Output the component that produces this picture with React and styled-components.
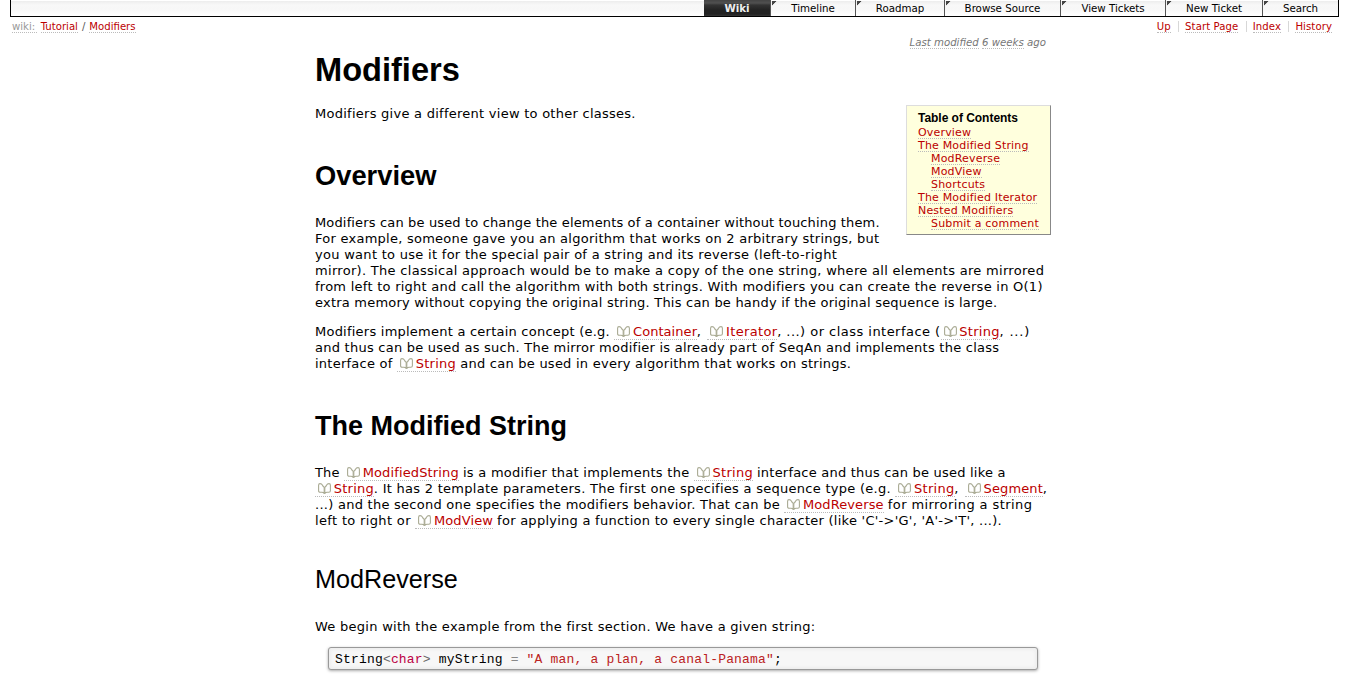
import React from "react";
import styled, { createGlobalStyle } from "styled-components";

const sans = `Verdana, "DejaVu Sans", sans-serif`;
const heading = `Arial, "Liberation Sans", sans-serif`;

const GlobalStyle = createGlobalStyle`
  body { margin: 0; background: #fff; color: #000; font: 13px/16px ${sans}; overflow: hidden; }
  * { box-sizing: border-box; }
`;

const Page = styled.div`
  height: 677px;
  overflow: hidden;
  padding: 0 10px;
`;
const Nav = styled.nav`
  display: flex;
  justify-content: flex-end;
  height: 17px;
  border: 1px solid #000;
  border-top: 0;
  background: linear-gradient(#fff 0 1px, #ededed 1px, #f8f8f8 5px, #f7f7f7 9px, #fff 16px);
`;
const Tab = styled.a`
  display: flex;
  justify-content: center;
  width: ${(p) => p.$w}px;
  height: 16px;
  border-left: ${(p) => (p.$active ? 0 : "1px solid #555")};
  font: ${(p) => (p.$active ? "bold" : "normal")} 10.25px/16px ${sans};
  color: ${(p) => (p.$active ? "#eee" : "#000")};
  background: ${(p) =>
    p.$active
      ? "linear-gradient(#444 0, #505050 3px, #333 5px, #222 10px, #222 14px, #333)"
      : "linear-gradient(135deg, #444 0 3px, transparent 3.6px) 1px 1px / 5px 5px no-repeat"};
`;
const Context = styled.div`
  display: flex;
  justify-content: space-between;
  align-items: flex-start;
  height: 19px;
  padding: 3px 7px 0 2px;
  font-size: 10.15px;
  line-height: 13px;
`;
const Crumbs = styled.div`
  display: flex;
  align-items: flex-start;
  gap: 4px;
  color: #555;
`;
const Links = styled.div`
  display: flex;
`;
const LinkCell = styled.span`
  display: flex;
  padding: 0 7.2px;
  letter-spacing: 0.08px;
  background: ${(p) => (p.$first ? "none" : "linear-gradient(#d7d7d7, #d7d7d7) 0 1px / 1px 11px no-repeat")};
  &:last-child { padding-right: 0; }
`;
const Link = styled.a`
  display: inline-block;
  color: ${(p) => (p.$muted ? "#999" : "#b00")};
  border-bottom: 1px dotted #bbb;
`;
const CrumbLink = styled(Link)`
  padding-right: ${(p) => (p.$muted ? 1.5 : 0)}px;
  height: 13px;
`;
const Article = styled.main`
  width: 736px;
  margin-left: 305px;
`;
const Modified = styled.div`
  height: 14px;
  text-align: right;
  padding-right: 5px;
  font: italic 10.2px/13px ${sans};
  color: #777;
  span { display: inline-block; height: 13px; border-bottom: 1px dotted #bbb; }
`;
const Title = styled.h1`
  margin: 0;
  height: 56px;
  font: bold 32.6px/40px ${heading};
`;
const Section = styled.h2`
  margin: 0;
  height: 93px;
  padding-top: 39px;
  font: bold ${(p) => p.$size}px/30px ${heading};
`;
const Subsection = styled.h3`
  margin: 0;
  height: 90px;
  padding-top: 35px;
  font: normal 25.2px/30px ${heading};
`;
const Toc = styled.aside`
  float: right;
  width: 145px;
  height: 130px;
  margin-top: -1px;
  padding: 6px 0 0 11px;
  border: 1px solid #ddd;
  border-right-color: #888;
  border-bottom-color: #888;
  background: #ffffdd;
  font-size: 11px;
  line-height: 13px;
  letter-spacing: 0.18px;
`;
const TocTitle = styled.h4`
  margin: 0;
  height: 14px;
  font: bold 12px/13px ${heading};
  letter-spacing: -0.03px;
`;
const TocItem = styled.div`
  height: 13px;
  padding-left: ${(p) => (p.$sub ? 13 : 0)}px;
  white-space: nowrap;
`;
const TocLink = styled(Link)`
  height: 13px;
`;
const Paragraph = styled.p`
  margin: 0 0 ${(p) => p.$gap ?? 13}px;
`;
const Line = styled.span`
  display: block;
  width: max-content;
  height: 16px;
  white-space: pre;
  letter-spacing: ${(p) => p.$ls ?? 0}px;
`;
const Run = styled.span`
  letter-spacing: ${(p) => p.$ls}px;
`;
const DocAnchor = styled(Link)`
  height: 16px;
  padding-left: 18.7px;
  margin-right: -0.3px;
  position: relative;
  letter-spacing: ${(p) => p.$ls - 0.04}px;
`;
const BookIcon = styled.svg`
  position: absolute;
  left: 3px;
  top: 2px;
  width: 13px;
  height: 11px;
`;
const Code = styled.pre`
  margin: 12px 13px 0;
  height: 23px;
  padding-left: 6px;
  border: 1px solid #999;
  border-radius: 3px;
  background: #f7f7f7;
  box-shadow: 0 1px 3px #aaa, inset 0 0 3px 2px #eee;
  font: 13px/23px "Liberation Mono", monospace;
  letter-spacing: 0.18px;
`;
const Token = styled.span`
  color: ${(p) => p.$c};
`;

const docSpacing = {
  Container: 0.097,
  Iterator: 0.382,
  String: 0.317,
  ModifiedString: 0.173,
  Segment: 0.171,
  ModReverse: 0.131,
  ModView: 0.146,
};

function Doc({ name }) {
  return (
    <DocAnchor $ls={docSpacing[name]}>
      <BookIcon viewBox="0 0 13 11" fill="none" stroke="#a9aa93" strokeWidth="1.1">
        <path d="M6.200 10.500C5.700 9.600 5 9.300 3.800 9.300H2.200C1.100 9.300 .6 8.700 .6 7.700V2.300C.6 1.100 1 .6 2 .6C3.300 .6 4 1.300 4.500 2.300C5 3.400 5.400 3.900 6.200 4.300Z" />
        <path d="M6.800 10.500C7.300 9.600 8 9.300 9.200 9.300H10.800C11.900 9.300 12.400 8.700 12.400 7.700V2.300C12.400 1.100 12 .6 11 .6C9.700 .6 9 1.300 8.500 2.300C8 3.400 7.600 3.900 6.800 4.300Z" />
      </BookIcon>
      {name}
    </DocAnchor>
  );
}

const tabs = [
  ["Wiki", 66, true],
  ["Timeline", 85],
  ["Roadmap", 89],
  ["Browse Source", 116],
  ["View Tickets", 105],
  ["New Ticket", 97],
  ["Search", 76],
];
const toc = [
  ["Overview"],
  ["The Modified String"],
  ["ModReverse", true],
  ["ModView", true],
  ["Shortcuts", true],
  ["The Modified Iterator"],
  ["Nested Modifiers"],
  ["Submit a comment", true],
];

export default function App() {
  return (
    <Page>
      <GlobalStyle />
      <Nav>
        {tabs.map(([label, width, active]) => (
          <Tab key={label} $w={width} $active={active}>{label}</Tab>
        ))}
      </Nav>
      <Context>
        <Crumbs>
          <CrumbLink $muted>wiki:</CrumbLink>
          <CrumbLink>Tutorial</CrumbLink>/<CrumbLink>Modifiers</CrumbLink>
        </Crumbs>
        <Links>
          {["Up", "Start Page", "Index", "History"].map((label, i) => (
            <LinkCell key={label} $first={i === 0}>
              <CrumbLink>{label}</CrumbLink>
            </LinkCell>
          ))}
        </Links>
      </Context>
      <Article>
        <Modified><span>Last modified</span> <span>6 weeks</span> ago</Modified>
        <Title>Modifiers</Title>
        <Toc>
          <TocTitle>Table of Contents</TocTitle>
          {toc.map(([label, sub]) => (
            <TocItem key={label} $sub={sub}><TocLink>{label}</TocLink></TocItem>
          ))}
        </Toc>
        <Paragraph $gap={0}>
          <Line $ls={0.26}>Modifiers give a different view to other classes.</Line>
        </Paragraph>
        <Section $size={27.3}>Overview</Section>
        <Paragraph>
          <Line $ls={0.15}>Modifiers can be used to change the elements of a container without touching them.</Line>
          <Line $ls={0.253}>For example, someone gave you an algorithm that works on 2 arbitrary strings, but</Line>
          <Line $ls={0.29}>you want to use it for the special pair of a string and its reverse (left-to-right</Line>
          <Line $ls={0.3}>mirror). The classical approach would be to make a copy of the one string, where all elements are mirrored</Line>
          <Line $ls={0.26}>from left to right and call the algorithm with both strings. With modifiers you can create the reverse in O(1)</Line>
          <Line $ls={0.215}>extra memory without copying the original string. This can be handy if the original sequence is large.</Line>
        </Paragraph>
        <Paragraph $gap={0}>
          <Line>
            <Run $ls={0.233}>Modifiers implement a certain concept (e.g. </Run><Doc name="Container" />
            <Run $ls={1.167}>, </Run><Doc name="Iterator" />
            <Run $ls={0.467}>, ...) or class interface (</Run><Doc name="String" /><Run $ls={0.828}>, ...)</Run>
          </Line>
          <Line $ls={0.245}>and thus can be used as such. The mirror modifier is already part of SeqAn and implements the class</Line>
          <Line>
            <Run $ls={0.248}>interface of </Run><Doc name="String" />
            <Run $ls={0.244}> and can be used in every algorithm that works on strings.</Run>
          </Line>
        </Paragraph>
        <Section $size={27}>The Modified String</Section>
        <Paragraph $gap={0}>
          <Line>
            <Run $ls={0.172}>The </Run><Doc name="ModifiedString" />
            <Run $ls={0.268}> is a modifier that implements the </Run><Doc name="String" />
            <Run $ls={0.211}> interface and thus can be used like a</Run>
          </Line>
          <Line>
            <Doc name="String" />
            <Run $ls={0.274}>. It has 2 template parameters. The first one specifies a sequence type (e.g. </Run><Doc name="String" />
            <Run $ls={1.167}>, </Run><Doc name="Segment" /><Run $ls={0.859}>,</Run>
          </Line>
          <Line>
            <Run $ls={0.26}>...) and the second one specifies the modifiers behavior. That can be </Run><Doc name="ModReverse" />
            <Run $ls={0.411}> for mirroring a string</Run>
          </Line>
          <Line>
            <Run $ls={0.342}>left to right or </Run><Doc name="ModView" />
            <Run $ls={0.26}> for applying a function to every single character (like 'C'-&gt;'G', 'A'-&gt;'T', ...).</Run>
          </Line>
        </Paragraph>
        <Subsection>ModReverse</Subsection>
        <Paragraph $gap={0}>
          <Line $ls={0.275}>We begin with the example from the first section. We have a given string:</Line>
        </Paragraph>
        <Code>String<Token $c="#666">&lt;</Token><Token $c="#b04">char</Token><Token $c="#666">&gt;</Token> myString <Token $c="#888">=</Token> <Token $c="#b22">"A man, a plan, a canal-Panama"</Token>;</Code>
      </Article>
    </Page>
  );
}
